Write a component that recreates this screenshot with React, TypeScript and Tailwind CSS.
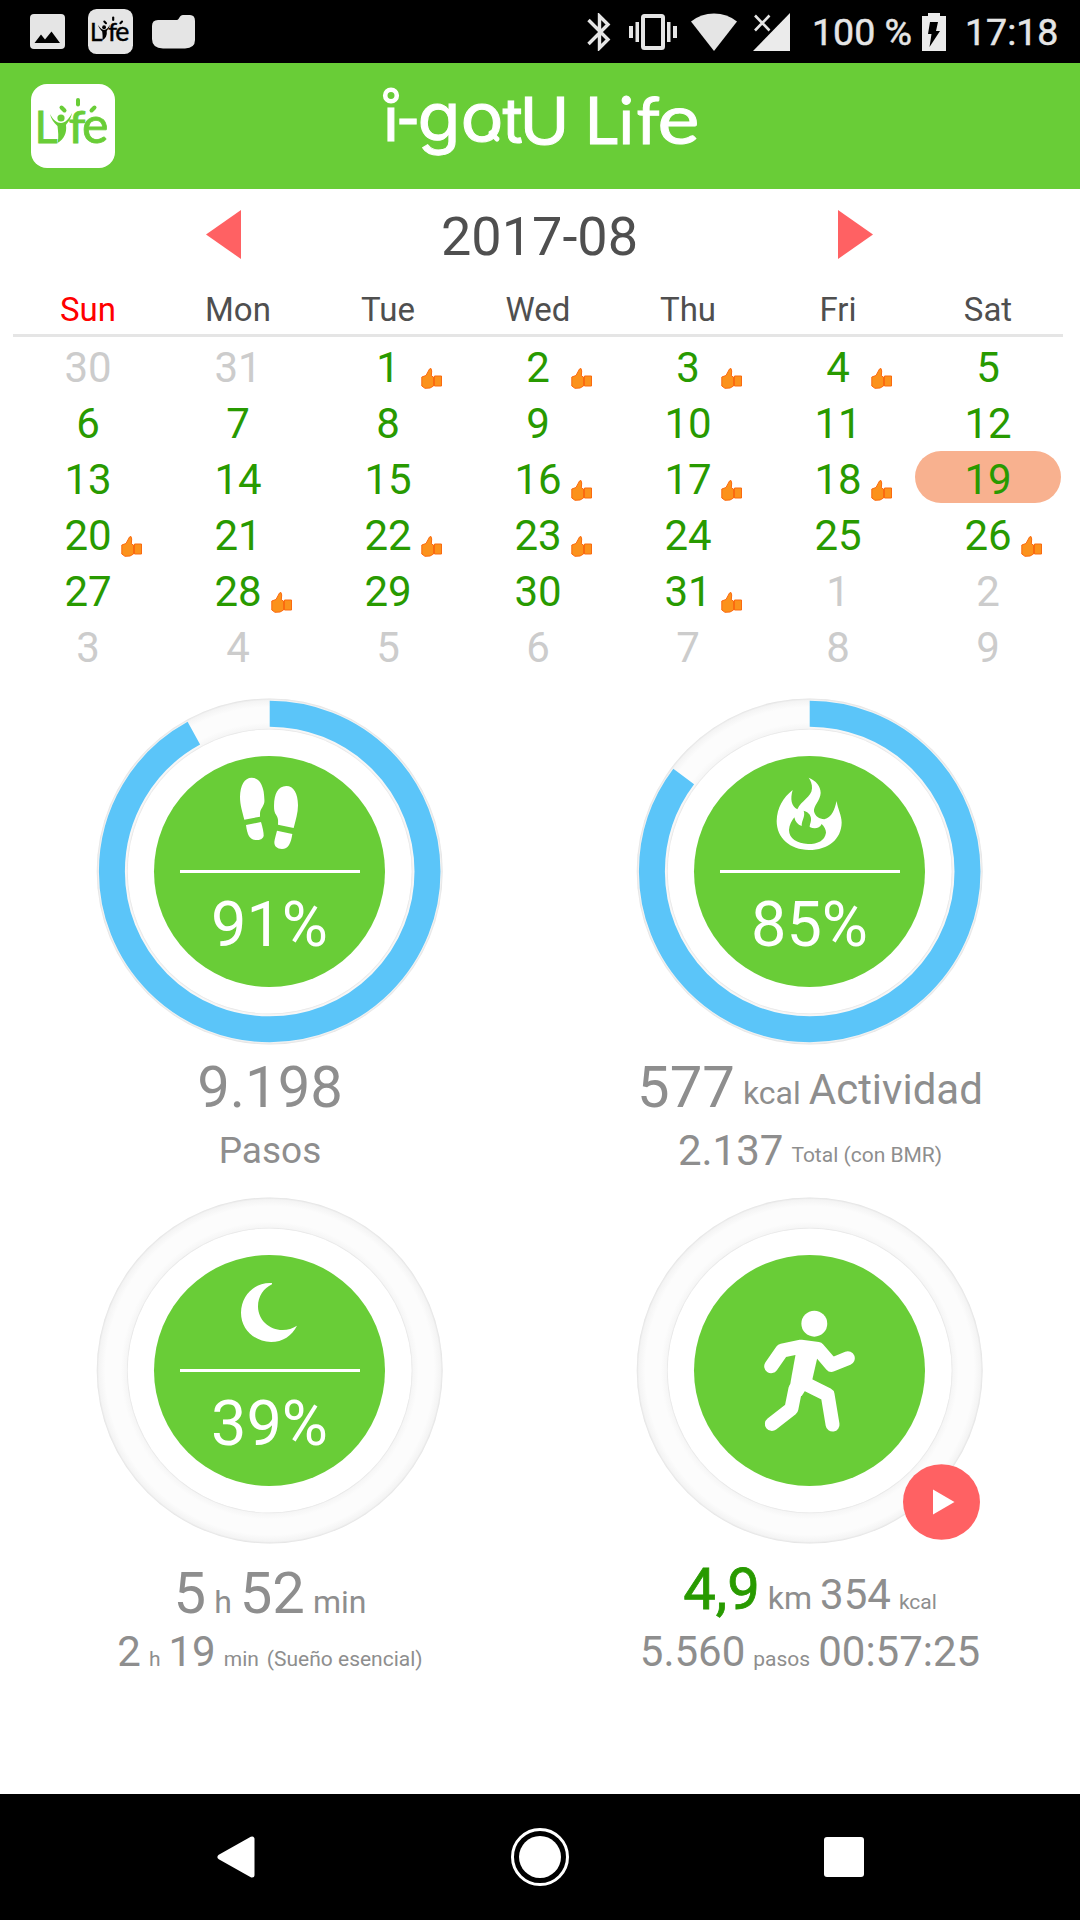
import React from "react";

const WEEKDAYS = ["Sun", "Mon", "Tue", "Wed", "Thu", "Fri", "Sat"];

const DAYS = [
  30, 31, 1, 2, 3, 4, 5,
  6, 7, 8, 9, 10, 11, 12,
  13, 14, 15, 16, 17, 18, 19,
  20, 21, 22, 23, 24, 25, 26,
  27, 28, 29, 30, 31, 1, 2,
  3, 4, 5, 6, 7, 8, 9,
];

const FIRST = 2;
const LAST = 32;
const SELECTED = 19;
const GOAL_DAYS = [1, 2, 3, 4, 16, 17, 18, 20, 22, 23, 26, 28, 31];

// "Life" badge, used in the header and as a notification icon
const LifeBadge = ({ bg, fg, className }: { bg: string; fg: string; className: string }) => (
  <svg viewBox="0 0 84 84" className={className}>
    <rect width="84" height="84" rx="16" fill={bg} />
    <text y="59" fill={fg} stroke={fg} strokeWidth="0.800" fontFamily="Lato, sans-serif">
      <tspan x="3.500" fontSize="45">L</tspan>
      <tspan x="37.500" fontSize="45" textLength="17" lengthAdjust="spacingAndGlyphs">f</tspan>
      <tspan x="51" fontSize="50">e</tspan>
    </text>
    {/* figure with raised arms */}
    <circle cx="30" cy="34" r="3.600" fill={fg} />
    <path d="M19 30C22 36 26 39 30 39S38 35 41 29C40 35 37 38 35 41C36 49 33 55 26.500 59C28 53 27 47 26.500 42C23 39 20 35 19 30Z" fill={fg} />
    <g stroke={fg} strokeWidth="4" strokeLinecap="round">
      <path d="M30.500 23.500L33.500 26.500" />
      <path d="M47 16V20.500" />
      <path d="M60.500 26.500L63.500 23.500" />
    </g>
  </svg>
);

const StatusBar = () => (
  <div className="flex h-[63px] items-center bg-black text-[#e5e5e5]">
    <svg viewBox="0 0 35 35" className="ml-[30px] size-[35px]">
      <rect width="35" height="35" rx="4" fill="#e5e5e5" />
      <path d="M4.500 29L11 20.500L15 25.500L21.500 17.500L30 29Z" fill="#000" />
    </svg>
    <LifeBadge bg="#e5e5e5" fg="#000" className="ml-[23px] size-[45px]" />
    <svg viewBox="0 0 43 34" className="ml-[19px] h-[34px] w-[43px]">
      <path d="M6 5H25C27 5 27.500 0 31 0H38Q43 0 43 6V25Q43 33 33 33.500H11Q0 33 0 24V11Q0 5 6 5Z" fill="#e5e5e5" />
    </svg>

    <svg viewBox="0 0 24 38" className="ml-auto h-[38px] w-[24px]">
      <path d="M1.500 7L21 26.500L12.500 35V3L21 11.500L1.500 31" fill="none" stroke="#e5e5e5" strokeWidth="3.400" />
    </svg>
    <svg viewBox="0 0 48 36" className="ml-[18px] h-[36px] w-[48px]">
      <rect x="14" y="2" width="20" height="32" rx="1.500" fill="none" stroke="#e5e5e5" strokeWidth="4" />
      <path d="M0 12H4V24H0ZM6.500 8H10V28H6.500ZM38 8H41.500V28H38ZM44 12H48V24H44Z" fill="#e5e5e5" />
    </svg>
    <svg viewBox="0 0 46 38" className="ml-[14px] h-[38px] w-[46px]">
      <path d="M0 8.500Q10 0.500 23 0.500T46 8.500L23 38Z" fill="#e5e5e5" />
    </svg>
    <svg viewBox="0 0 37 38" className="ml-[16px] h-[38px] w-[37px]">
      <path d="M37 0V38H0Z" fill="#ebebeb" />
      <path d="M2 2.500L16.500 17.500M16.500 2.500L2 17.500" stroke="#e5e5e5" strokeWidth="2.600" />
    </svg>
    <span className="ml-[22px] w-[98px] pt-[2px] text-[37.5px] leading-none whitespace-nowrap [-webkit-text-stroke:0.5px_#e5e5e5]">100 %</span>
    <svg viewBox="0 0 24 38" className="ml-[12px] h-[38px] w-[24px]">
      <path d="M6 0H18V3H24V38H0V3H6Z" fill="#ebebeb" />
      <path d="M8 9H16L14 18H18L7.500 34L9.500 21H6Z" fill="#000" />
    </svg>
    <span className="ml-[19px] w-[115px] pt-[2px] text-[37.5px] leading-none whitespace-nowrap [-webkit-text-stroke:0.5px_#e5e5e5]">17:18</span>
  </div>
);

const Header = () => (
  <header className="grid h-[126px] grid-cols-[1fr_auto_1fr] items-center bg-[#69cd37]">
    <LifeBadge bg="#fff" fg="#69cd37" className="ml-[31px] size-[84px]" />
    <svg viewBox="380 63 320 126" className="h-[126px] w-[320px]">
      <text y="141" fill="#fff" stroke="#fff" strokeWidth="1" fontFamily="Inter, sans-serif">
        <tspan x="383" fontSize="66" letterSpacing="-3" fontFamily="Lato, sans-serif">i-</tspan>
        <tspan x="417.500" fontSize="67" textLength="43" lengthAdjust="spacingAndGlyphs">g</tspan>
        <tspan x="460.500" fontSize="67" textLength="43" lengthAdjust="spacingAndGlyphs">o</tspan>
        <tspan x="502.500" y="143" fontSize="62">t</tspan>
        <tspan x="519.500" y="143.500" fontSize="64" textLength="50" lengthAdjust="spacingAndGlyphs">U</tspan>
        <tspan x="584.500" y="144" fontSize="65" fontFamily="Lato, sans-serif">L</tspan>
        <tspan x="618.500" y="144" fontSize="65" fontFamily="Lato, sans-serif">i</tspan>
        <tspan x="636.500" y="144" fontSize="66" fontFamily="Lato, sans-serif">f</tspan>
        <tspan x="657.500" y="144" fontSize="70" textLength="42" lengthAdjust="spacingAndGlyphs" fontFamily="Lato, sans-serif">e</tspan>
      </text>
      <circle cx="391" cy="95.500" r="5.800" fill="#69cd37" stroke="#fff" strokeWidth="4.600" />
      <path d="M491 133L497 139" stroke="#fff" strokeWidth="5" strokeLinecap="round" />
    </svg>
  </header>
);

const Thumb = () => (
  <svg viewBox="0 0 21 21" className="absolute top-[29px] right-[21px] size-[21px]">
    <path d="M0.800 9L5 7.500L8.500 1L10 0.500L10.700 3L10.300 8L12.500 9V18L9 20L4 20.300L0.800 18Z" fill="#fb921c" stroke="#fb6a10" />
    <path d="M13.500 8H20.500V18H13.500Z" fill="#fb921c" stroke="#fb6a10" />
  </svg>
);

const Calendar = () => (
  <section className="pr-[17px] pl-[13px]">
    <div className="flex h-[91px] items-center justify-between pr-[190px] pl-[193px]">
      <svg viewBox="0 0 35 49" className="h-[49px] w-[35px]">
        <path d="M35 0V49L0 24.500Z" fill="#ff6163" />
      </svg>
      <h1 className="pt-[4px] text-[54px] leading-none text-[#4f4f4f]">2017-08</h1>
      <svg viewBox="0 0 35 49" className="h-[49px] w-[35px]">
        <path d="M0 0V49L35 24.500Z" fill="#ff6163" />
      </svg>
    </div>

    <div className="mt-[5px] mb-[2px] grid h-[52px] grid-cols-7 items-center border-b-3 border-[#e5e5e5] text-center text-[33px] leading-none text-[#4f4f4f]">
      {WEEKDAYS.map((d) => (
        <span key={d} className={d === "Sun" ? "text-[#ff0000]" : ""}>{d}</span>
      ))}
    </div>

    <div className="grid grid-cols-7 text-[42px] leading-none">
      {DAYS.map((day, i) => {
        const current = i >= FIRST && i <= LAST;
        const selected = current && day === SELECTED;
        return (
          <div key={i} className={`relative flex h-[56px] items-start justify-center ${current ? "text-[#289a00]" : "text-[#cccccc]"}`}>
            <div className={`flex h-[52px] w-[146px] items-center justify-center rounded-full pt-[6px] ${selected ? "bg-[#f8b18f]" : ""}`}>
              {day}
            </div>
            {current && GOAL_DAYS.includes(day) && <Thumb />}
          </div>
        );
      })}
    </div>
  </section>
);

// Ring goes clockwise from the top, value is 0..1
const Ring = ({ id, value = 0, children }: { id: string; value?: number; children: React.ReactNode }) => {
  const r = 157.8;
  const length = 2 * Math.PI * r;
  return (
    <div className="relative flex h-[347px] w-[348px] shrink-0 items-start justify-center pt-[58px]">
      <svg viewBox="0 0 348 347" className="absolute inset-0 h-[347px] w-[348px]">
        <defs>
          <radialGradient id={id} gradientUnits="userSpaceOnUse" cx="173.700" cy="173.500" r="173">
            <stop offset="0.820" stopColor="#e4e4e4" />
            <stop offset="0.828" stopColor="#f6f6f6" />
            <stop offset="0.860" stopColor="#fcfcfc" />
            <stop offset="0.950" stopColor="#fcfcfc" />
            <stop offset="0.988" stopColor="#f4f4f4" />
            <stop offset="1" stopColor="#e2e2e2" />
          </radialGradient>
        </defs>
        <circle cx="173.700" cy="173.500" r="173" fill={`url(#${id})`} />
        <circle cx="173.700" cy="173.500" r="142" fill="#fff" />
        {value > 0 && (
          <circle
            cx="173.700"
            cy="173.500"
            r={r}
            fill="none"
            stroke="#5bc5f9"
            strokeWidth="26"
            strokeDasharray={`${length * value} ${length}`}
            transform="rotate(-90 173.700 173.500)"
          />
        )}
      </svg>
      <div className="relative mr-px flex size-[231px] flex-col items-center rounded-full bg-[#69cd37] text-white">{children}</div>
    </div>
  );
};

const Percent = ({ children }: { children: React.ReactNode }) => (
  <>
    <div className="h-[3px] w-[180px] shrink-0 bg-white" />
    <div className="mt-[20px] text-[63px] leading-none">{children}</div>
  </>
);

const Footprints = () => (
  <svg viewBox="222 228 696 342" className="h-[114px] w-[232px] shrink-0" fill="#fff">
    <path d="M515 293C536 293 547 312 551 335C552 346 554 356 553 367C550 381 541 387 540 400V410L493 419C487 394 480 375 480 350C481 316 493 293 515 293Z" />
    <path d="M498 435L543 426C547 440 551 455 551 467C549 477 540 480 529 480C509 480 502 466 498 435Z" />
    <path d="M619 318C641 318 654 340 654 376C654 399 647 421 641 444L594 434C595 420 594 414 589 406C583 397 582 390 582 377C583 340 593 320 619 318Z" />
    <path d="M591 452L637 462C633 490 625 507 606 507C591 506 583 500 583 486C584 475 588 465 591 452Z" />
  </svg>
);

const Flame = () => (
  <svg viewBox="222 228 696 342" className="h-[114px] w-[232px] shrink-0" fill="#fff">
    <path
      fillRule="evenodd"
      d="M566 293C588 302 602 318 602 339C601 362 580 377 582 394C585 409 598 417 613 418C636 411 643 391 650 363C653 387 665 405 665 428C664 477 625 510 567 510C510 509 470 474 470 423C471 383 490 352 518 330C510 358 514 378 532 388C543 362 575 352 576 325C577 312 571 300 566 293ZM551 392C568 397 574 408 573 421C572 430 569 434 569 441C583 448 598 446 605 432C613 440 618 449 618 458C614 482 594 492 564 492C531 490 507 476 507 450C508 434 515 423 523 412C526 426 533 434 545 438C545 418 557 410 551 392Z"
    />
  </svg>
);

const Moon = () => (
  <svg viewBox="222 225 696 342" className="h-[114px] w-[232px] shrink-0" fill="#fff">
    <path d="M576 313C551 325 534 348 534 380C535 420 567 449 608 450C624 450 638 445 651 437C636 467 608 486 573 486C522 485 483 447 483 398C484 348 522 306 576 309Z" />
  </svg>
);

const Runner = () => (
  <svg viewBox="222 225 696 696" className="size-[232px]" fill="none" stroke="#fff" strokeWidth="42" strokeLinecap="round" strokeLinejoin="round">
    <circle cx="583" cy="432" r="39" fill="#fff" stroke="none" />
    <path d="M453 560L486 513L543 501L594 508L635 556L684 536" />
    <path d="M455 734L514 688L526 628" />
    <path d="M555 612L623 646L638 736" />
    <path d="M531 500H600L577 600L545 650H505L512 605Z" fill="#fff" stroke="none" />
  </svg>
);

const Activity = () => (
  <main className="mt-[23px] grid grid-cols-2 justify-items-center gap-y-[19px] text-[#8e8e8e] [&_span]:whitespace-nowrap">
    <div className="flex h-[480px] flex-col items-center leading-none">
      <Ring id="steps" value={0.9198}>
        <Footprints />
        <Percent>91%</Percent>
      </Ring>
      <span className="mt-[13px] text-[58px] leading-none">9.198</span>
      <span className="mt-[16px] text-[37px] leading-none">Pasos</span>
    </div>

    <div className="flex h-[480px] flex-col items-center leading-none">
      <Ring id="calories" value={0.8525}>
        <Flame />
        <Percent>85%</Percent>
      </Ring>
      <div className="mt-[13px] flex h-[58px] items-end">
        <span className="text-[58px]">577</span>
        <span className="mb-[7px] ml-[8px] text-[32px]">kcal</span>
        <span className="mb-[5px] ml-[8px] text-[42px]">Actividad</span>
      </div>
      <div className="mt-[14px] flex h-[42px] items-end">
        <span className="text-[42px]">2.137</span>
        <span className="mb-[6px] ml-[8px] text-[21px]">Total (con BMR)</span>
      </div>
    </div>

    <div className="flex h-[480px] flex-col items-center leading-none">
      <Ring id="sleep">
        <Moon />
        <Percent>39%</Percent>
      </Ring>
      <div className="mt-[20px] flex h-[58px] items-baseline">
        <span className="text-[58px]">5</span>
        <span className="ml-[8px] text-[32px]">h</span>
        <span className="ml-[8px] text-[58px]">52</span>
        <span className="ml-[8px] text-[32px]">min</span>
      </div>
      <div className="mt-[9px] flex h-[42px] items-baseline">
        <span className="text-[42px]">2</span>
        <span className="ml-[8px] text-[21px]">h</span>
        <span className="ml-[8px] text-[42px]">19</span>
        <span className="ml-[8px] text-[21px]">min</span>
        <span className="ml-[8px] text-[21px]">(Sueño esencial)</span>
      </div>
    </div>

    <div className="flex h-[480px] flex-col items-center leading-none">
      <div className="relative shrink-0">
        <Ring id="workout">
          <Runner />
        </Ring>
        <svg viewBox="0 0 77 76" className="absolute top-[267px] left-[267px] h-[76px] w-[77px]">
          <ellipse cx="38.500" cy="38" rx="38.500" ry="37.800" fill="#ff6163" />
          <path d="M30 25.500V50.500L51.500 38Z" fill="#fff" />
        </svg>
      </div>
      <div className="mt-[16px] flex h-[58px] items-baseline">
        <span className="text-[58px] text-[#289a00] [-webkit-text-stroke:0.8px_#289a00]">4,9</span>
        <span className="ml-[8px] text-[32px]">km</span>
        <span className="ml-[8px] text-[42px]">354</span>
        <span className="ml-[8px] text-[21px]">kcal</span>
      </div>
      <div className="mt-[13px] flex h-[42px] items-baseline">
        <span className="text-[42px]">5.560</span>
        <span className="ml-[8px] text-[21px]">pasos</span>
        <span className="ml-[8px] text-[42px]">00:57:25</span>
      </div>
    </div>
  </main>
);

const NavBar = () => (
  <nav className="mt-auto flex h-[126px] items-center justify-between bg-black pr-[216px] pl-[217px]">
    <svg viewBox="0 0 38 42" className="h-[42px] w-[38px]">
      <path d="M35 3V39L3 21Z" fill="#fff" stroke="#fff" strokeWidth="5" strokeLinejoin="round" />
    </svg>
    <svg viewBox="0 0 58 58" className="size-[58px]">
      <circle cx="29" cy="29" r="27.500" fill="none" stroke="#fff" strokeWidth="3" />
      <circle cx="29" cy="29" r="21" fill="#fff" />
    </svg>
    <div className="size-[40px] rounded-[3px] bg-white" />
  </nav>
);

export default function App() {
  return (
    <div className="flex h-[1920px] w-[1080px] flex-col overflow-hidden bg-white font-[Roboto,sans-serif]">
      <StatusBar />
      <Header />
      <Calendar />
      <Activity />
      <NavBar />
    </div>
  );
}
